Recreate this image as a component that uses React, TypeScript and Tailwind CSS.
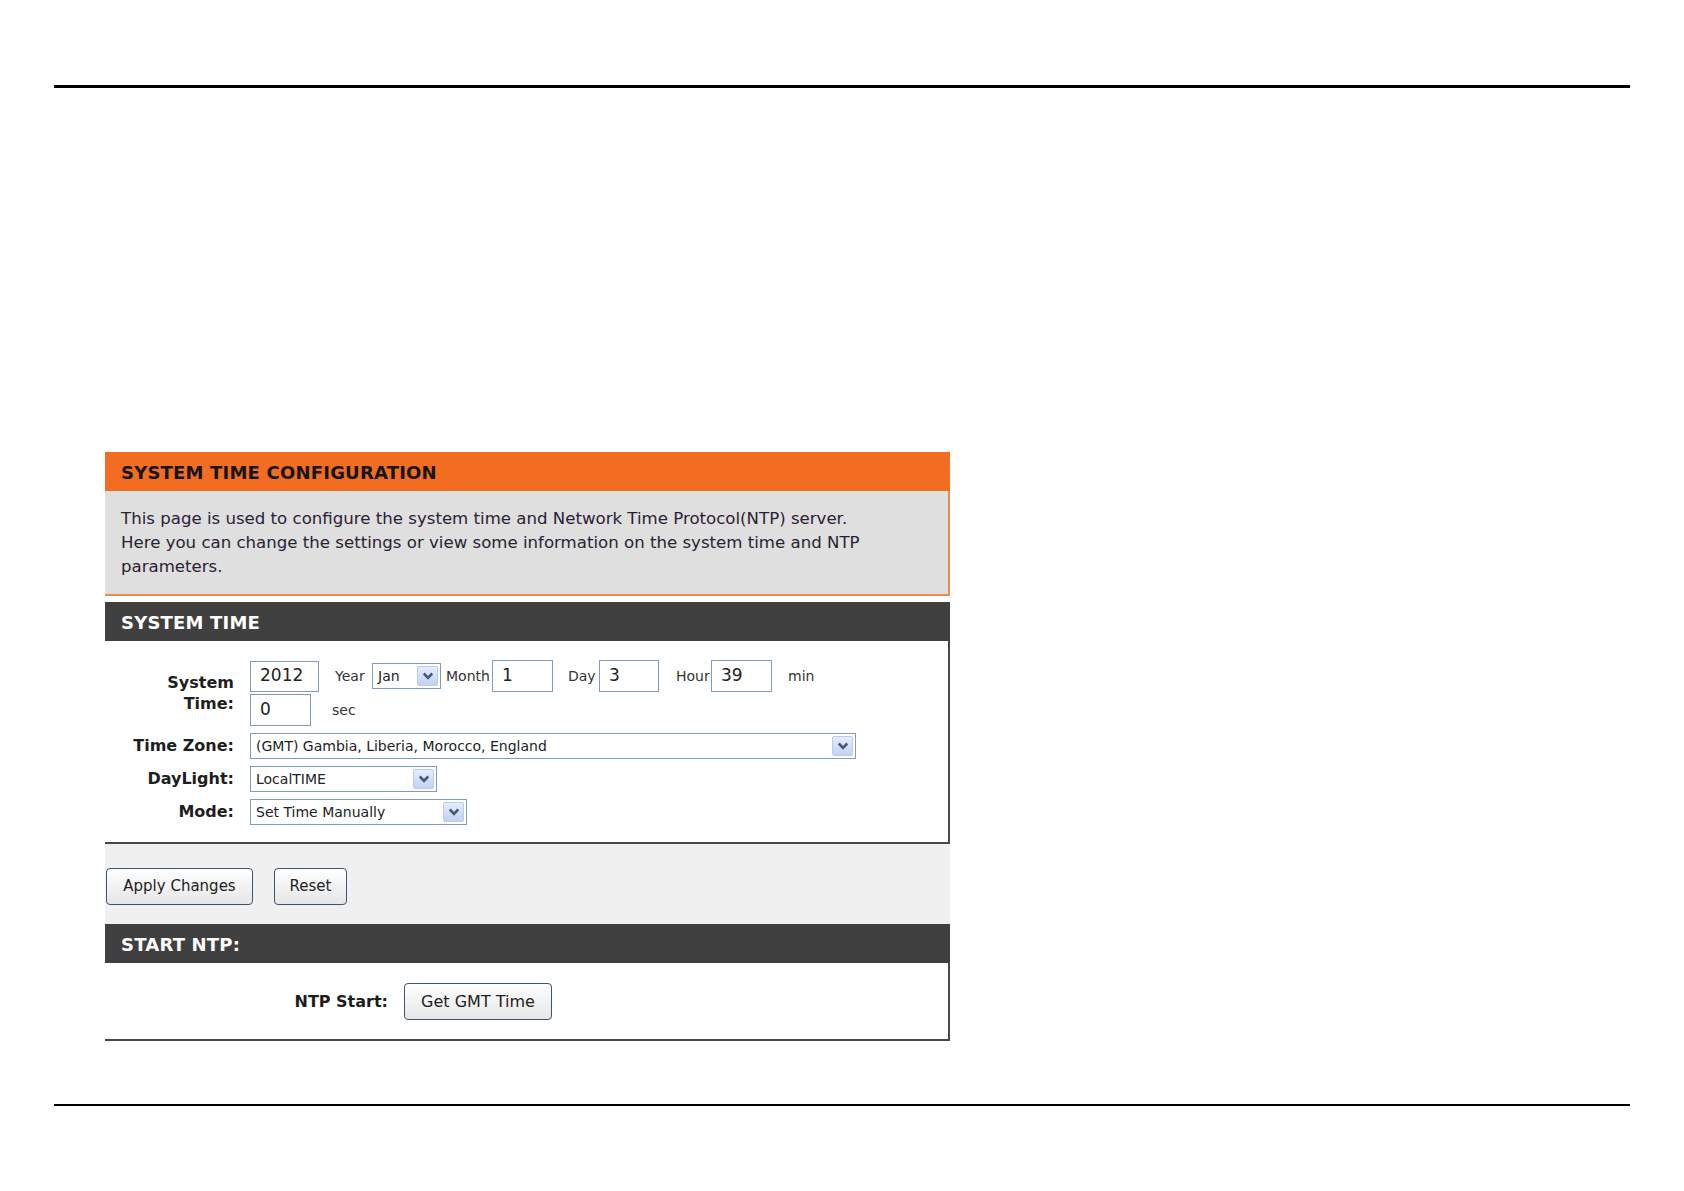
import React from 'react'

const font = "font-['DejaVu_Sans',sans-serif]"

function Chevron() {
  return (
    <svg width="12" height="8" viewBox="0 0 12 8">
      <path d="M1.8 1.5 L6 5.8 L10.2 1.5" fill="none" stroke="#44587c" strokeWidth="2.6" />
    </svg>
  )
}

function Select({ value, width }: { value: string; width: string }) {
  return (
    <div className={`${width} h-[26px] border border-[#7f9db9] bg-white flex items-center justify-between pl-[5px] pr-[2px]`}>
      <span className="text-[14px] text-[#222] leading-none whitespace-nowrap">{value}</span>
      <div className="w-[21px] h-[20px] rounded-[2px] border border-[#bccbee] bg-gradient-to-b from-[#e6edfb] to-[#c3d2f2] flex items-center justify-center">
        <Chevron />
      </div>
    </div>
  )
}

function TextBox({ value, width, height = 'h-[32px]' }: { value: string; width: string; height?: string }) {
  return (
    <div className={`${width} ${height} border border-[#7f9db9] bg-white flex items-center pl-[9px] text-[17px] text-[#222]`}>
      {value}
    </div>
  )
}

function Btn({ label, width, size = 'text-[15px]' }: { label: string; width: string; size?: string }) {
  return (
    <button
      className={`${width} h-[37px] rounded-[4px] border-[1.5px] border-[#3a5671] bg-gradient-to-b from-white to-[#e6e6e6] ${size} text-[#222] flex items-center justify-center`}
    >
      {label}
    </button>
  )
}

function SectionHeader({ title }: { title: string }) {
  return (
    <div className="h-[39px] bg-[#404040] flex items-center px-4 pt-[2px]">
      <span className="text-[18px] font-bold text-white tracking-[0.2px]">{title}</span>
    </div>
  )
}

export default function App() {
  return (
    <div className={`${font} w-[1684px] h-[1191px] bg-white overflow-hidden pt-[85px] px-[54px]`}>
      <div className="h-[3px] bg-black" />

      <div className="ml-[51px] mt-[364px] w-[845px]">
        {/* page title */}
        <div className="h-[39px] bg-[#f26c22] flex items-center px-4 pt-[2px]">
          <span className="text-[18px] font-bold text-[#151515] tracking-[0.2px]">SYSTEM TIME CONFIGURATION</span>
        </div>
        <div className="bg-[#dfdfdf] border-r-2 border-b-2 border-[#f28a4c] pl-4 pt-[16px] pb-[15px] pr-[60px]">
          <p className="text-[16.6px] leading-[24px] text-[#2a2233]">
            This page is used to configure the system time and Network Time Protocol(NTP) server.
            <br />
            Here you can change the settings or view some information on the system time and NTP parameters.
          </p>
        </div>

        <div className="h-[6px]" />
        <SectionHeader title="SYSTEM TIME" />

        {/* system time form */}
        <div className="bg-white border-r-2 border-b-2 border-[#484848] pt-[19px] pb-[17px]">
          <div className="grid grid-cols-[129px_1fr] gap-x-4 gap-y-[7px] items-center">
            <div className="text-right font-bold text-[16px] leading-[21px] text-[#1e1e1e]">
              System
              <br />
              Time:
            </div>
            <div className="flex flex-col gap-[2px]">
              <div className="flex items-center text-[14px] text-[#333]">
                <TextBox value="2012" width="w-[69px]" height="h-[31px]" />
                <span className="ml-4 w-[37px]">Year</span>
                <Select value="Jan" width="w-[69px]" />
                <span className="ml-[5px] w-[46px]">Month</span>
                <TextBox value="1" width="w-[61px]" />
                <span className="ml-[15px] w-[31px]">Day</span>
                <TextBox value="3" width="w-[60px]" />
                <span className="ml-[17px] w-[35px]">Hour</span>
                <TextBox value="39" width="w-[61px]" />
                <span className="ml-4">min</span>
              </div>
              <div className="flex items-center text-[14px] text-[#333]">
                <TextBox value="0" width="w-[61px]" />
                <span className="ml-[21px]">sec</span>
              </div>
            </div>

            <div className="text-right font-bold text-[16px] text-[#1e1e1e]">Time Zone:</div>
            <Select value="(GMT) Gambia, Liberia, Morocco, England" width="w-[606px]" />

            <div className="text-right font-bold text-[16px] text-[#1e1e1e]">DayLight:</div>
            <Select value="LocalTIME" width="w-[187px]" />

            <div className="text-right font-bold text-[16px] text-[#1e1e1e]">Mode:</div>
            <Select value="Set Time Manually" width="w-[217px]" />
          </div>
        </div>

        {/* actions */}
        <div className="bg-[#f0f0f0] h-[80px] pt-[24px] pl-px flex items-start gap-[21px]">
          <Btn label="Apply Changes" width="w-[147px]" />
          <Btn label="Reset" width="w-[73px]" />
        </div>

        <SectionHeader title="START NTP:" />
        <div className="bg-white border-r-2 border-b-2 border-[#484848] pt-[20px] pb-[19px] flex items-center">
          <div className="w-[283px] text-right font-bold text-[16px] text-[#1e1e1e]">NTP Start:</div>
          <div className="ml-[16px]">
            <Btn label="Get GMT Time" width="w-[148px]" size="text-[16px]" />
          </div>
        </div>
      </div>

      <div className="mt-[63px] h-[2px] bg-black" />
    </div>
  )
}
